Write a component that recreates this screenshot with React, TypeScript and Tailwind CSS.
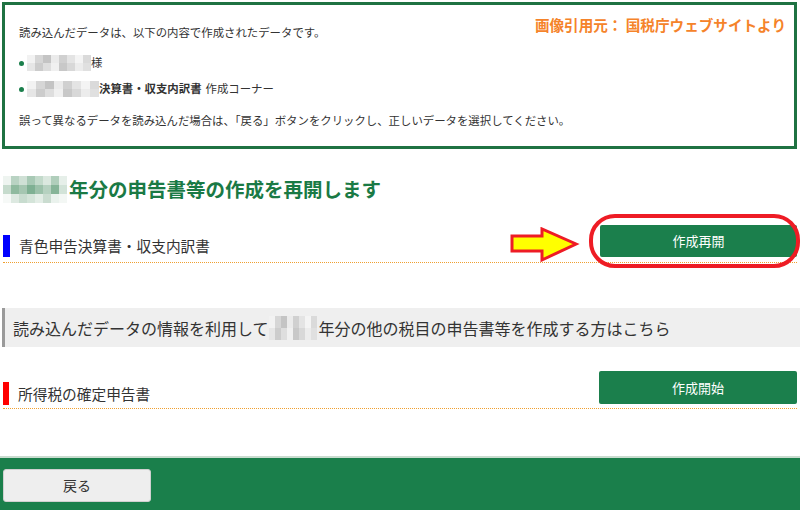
const font = { fontFamily: '"Noto Sans CJK JP", "Noto Sans", sans-serif' };

// pixelated stand-ins for the blurred parts of the screenshot
const grayCells = [
  ["bg-[#f2f2f2]", "bg-[#d6d6d6]", "bg-[#c4c4c4]", "bg-[#ebebeb]", "bg-[#d0d0d0]", "bg-[#e4e4e4]", "bg-[#f4f4f4]", "bg-[#dadada]"],
  ["bg-[#e6e6e6]", "bg-[#cccccc]", "bg-[#dedede]", "bg-[#f0f0f0]", "bg-[#c8c8c8]", "bg-[#d8d8d8]", "bg-[#ececec]", "bg-[#e0e0e0]"],
];

const greenCells = [
  ["bg-[#eef4f0]", "bg-[#b9d3c3]", "bg-[#cfe0d5]", "bg-[#a8c9b5]", "bg-[#c3dacb]", "bg-[#dbe8df]", "bg-[#b0cebb]", "bg-[#e6efe9]"],
  ["bg-[#c6dbcd]", "bg-[#8fba9f]", "bg-[#a5c6b1]", "bg-[#7fb093]", "bg-[#9cc1aa]", "bg-[#b6d1c0]", "bg-[#86b498]", "bg-[#d2e3d8]"],
  ["bg-[#f6f9f7]", "bg-[#dde9e1]", "bg-[#c8dccf]", "bg-[#d4e4d9]", "bg-[#e3ede6]", "bg-[#cadcd0]", "bg-[#eaf2ed]", "bg-[#f3f7f4]"],
];

function Mosaic({ rows, cell }: { rows: string[][]; cell: string }) {
  return (
    <span className="inline-flex flex-col align-middle">
      {rows.map((r, i) => (
        <span key={i} className="flex">
          {r.map((c, j) => (
            <span key={j} className={`${cell} ${c}`} />
          ))}
        </span>
      ))}
    </span>
  );
}

function Bullet({ children }: { children: React.ReactNode }) {
  return (
    <li className="flex items-center h-[20px]">
      <span className="w-[5px] h-[5px] rounded-full bg-[#1b7f4c] mr-[3px]" />
      {children}
    </li>
  );
}

export default function App() {
  return (
    <div className="relative w-[800px] h-[510px] overflow-hidden bg-white text-[#333]" style={font}>
      {/* data summary */}
      <div className="relative mt-[2px] ml-[2px] mr-[3px] h-[147px] border-[3px] border-[#1f7242] px-[14px] pt-[19px] text-[11.4px]">
        <p className="leading-[16px]">読み込んだデータは、以下の内容で作成されたデータです。</p>
        <ul className="mt-[13px] flex flex-col gap-[6px]">
          <Bullet>
            <Mosaic rows={grayCells} cell="w-[8px] h-[8px]" />
            <span>様</span>
          </Bullet>
          <Bullet>
            <Mosaic rows={grayCells} cell="w-[9px] h-[8px]" />
            <span className="font-bold">決算書・収支内訳書</span>
            <span className="ml-[4px]">作成コーナー</span>
          </Bullet>
        </ul>
        <p className="mt-[13px] leading-[16px]">
          誤って異なるデータを読み込んだ場合は、「戻る」ボタンをクリックし、正しいデータを選択してください。
        </p>
        <p className="absolute right-[8px] top-[9px] text-[14.6px] font-bold text-[#f5832a]">
          画像引用元： 国税庁ウェブサイトより
        </p>
      </div>

      <div className="px-[3px]">
        <h2 className="mt-[26px] flex items-center h-[28px] text-[19.5px] font-bold text-[#1a7a45]">
          <Mosaic rows={greenCells} cell="w-[8px] h-[9px]" />
          <span className="ml-[2px]">年分の申告書等の作成を再開します</span>
        </h2>

        {/* resume row */}
        <div className="mt-[23px] flex h-[37px] items-end justify-between border-b border-dotted border-[#f0a030] pb-[5px]">
          <div className="flex items-center">
            <span className="w-[7px] h-[22px] bg-[#0000ff]" />
            <span className="ml-[9px] text-[14.7px] leading-[22px]">青色申告決算書・収支内訳書</span>
          </div>
          <button className="w-[197px] h-[32px] rounded-[2px] bg-[#1b7f4c] text-[13px] text-white">作成再開</button>
        </div>
      </div>

      <div className="mt-[45px] ml-[2px] flex h-[39px] items-center border-l-[3px] border-[#9a9a9a] bg-[#efefef] pl-[8px] text-[16px]">
        <span>読み込んだデータの情報を利用して</span>
        <Mosaic rows={grayCells} cell="w-[6px] h-[12px]" />
        <span className="ml-[2px]">年分の他の税目の申告書等を作成する方はこちら</span>
      </div>

      <div className="px-[3px]">
        <div className="mt-[24px] flex h-[38px] items-end justify-between border-b border-dotted border-[#f0a030] pb-[3px]">
          <div className="flex items-center">
            <span className="w-[6px] h-[23px] bg-[#ff0000]" />
            <span className="ml-[9px] text-[14.7px] leading-[22px]">所得税の確定申告書</span>
          </div>
          <button className="w-[198px] h-[33px] mb-[1px] rounded-[2px] bg-[#1b7f4c] text-[13px] text-white">作成開始</button>
        </div>
      </div>

      {/* footer */}
      <div className="mt-[47px] h-[60px] border-t-2 border-[#c9dccf] bg-[#1a7f4b] px-[3px] pt-[11px]">
        <button className="w-[148px] h-[33px] rounded-[3px] border border-[#d0d0d0] bg-[#eeeeee] text-[14px] text-[#333]">戻る</button>
      </div>

      {/* annotation overlays */}
      <svg className="absolute left-[510px] top-[227px]" width="70" height="36" viewBox="0 0 70 36">
        <polygon
          points="2,9 32,9 32,2 66,17 32,33 32,24 2,24"
          fill="#ffff00"
          stroke="#ee1c25"
          strokeWidth="3"
          strokeLinejoin="miter"
        />
      </svg>
      <div className="absolute left-[589px] top-[214px] w-[211px] h-[54px] rounded-[26px] border-[4px] border-[#ee1c25]" />
    </div>
  );
}
